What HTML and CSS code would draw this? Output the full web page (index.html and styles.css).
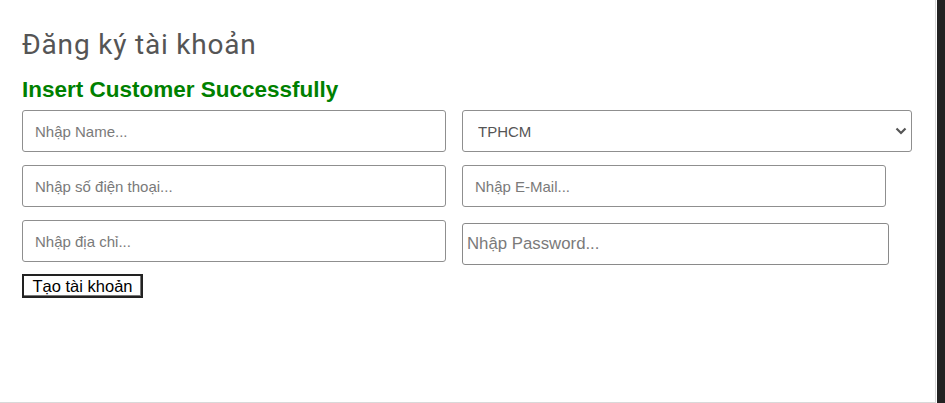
FILE: index.html
```html
<!DOCTYPE html>
<html lang="vi">
<head>
<meta charset="utf-8">
<title>Đăng ký tài khoản</title>
<link rel="stylesheet" href="styles.css">
</head>
<body>
<div class="page">
  <main class="content">
    <h2 class="title">Đăng ký tài khoản</h2>
    <h3 class="msg">Insert Customer Successfully</h3>
    <form class="form">
      <div class="grid">
        <div class="col col-left">
          <input class="field" type="text" placeholder="Nhập Name...">
          <input class="field" type="text" placeholder="Nhập số điện thoại...">
          <input class="field" type="text" placeholder="Nhập địa chỉ...">
        </div>
        <div class="col col-right">
          <div class="select-wrap">
            <select class="field select">
              <option>TPHCM</option>
            </select>
            <svg class="chev" width="12" height="8" viewBox="0 0 12 8"><path d="M1.5 1.5 L6 6 L10.5 1.5" fill="none" stroke="#555" stroke-width="2.2"/></svg>
          </div>
          <input class="field email" type="text" placeholder="Nhập E-Mail...">
          <input class="field password" type="password" placeholder="Nhập Password...">
        </div>
      </div>
      <button class="btn" type="button">Tạo tài khoản</button>
    </form>
  </main>
  <div class="bar"></div>
</div>
</body>
</html>
```

FILE: styles.css
```css
html, body {
  margin: 0;
  padding: 0;
  background: #fff;
}

.page {
  display: flex;
  width: 945px;
  height: 403px;
}

.content {
  flex: none;
  width: 913px;
  height: 402px;
  padding: 0 0 0 22px;
  border-right: 1px solid #d9d9d9;
  border-bottom: 1px solid #d9d9d9;
  box-sizing: content-box;
  font-family: "Liberation Sans", Arial, sans-serif;
}

.bar {
  flex: 1;
  background: #222;
  margin-left: 1px;
}

.title {
  margin: 0;
  padding-top: 28px;
  font-family: Roboto, "Noto Sans", sans-serif;
  font-weight: 400;
  font-size: 28px;
  letter-spacing: 0.8px;
  line-height: 34px;
  color: #555;
}

.msg {
  margin: 15px 0 0 0;
  font-family: "Liberation Sans", Arial, sans-serif;
  font-weight: 700;
  font-size: 22.5px;
  line-height: 26px;
  color: #008000;
}

.form {
  margin-top: 7px;
}

.grid {
  display: flex;
  gap: 16px;
}

.col {
  display: flex;
  flex-direction: column;
}

.col-left {
  width: 424px;
  gap: 13px;
}

.col-right {
  width: 450px;
}

.field {
  box-sizing: border-box;
  height: 42px;
  width: 424px;
  margin: 0;
  border: 1px solid #8f8f8f;
  border-radius: 3px;
  padding: 0 12px;
  font-family: "Liberation Sans", Arial, sans-serif;
  font-size: 15px;
  color: #333;
  background: #fff;
  outline: none;
}

.field::placeholder {
  color: #7a7a7a;
}

.select-wrap {
  position: relative;
  width: 450px;
}

.select {
  width: 450px;
  appearance: none;
  -webkit-appearance: none;
  padding-left: 15px;
  color: #555;
}

.chev {
  position: absolute;
  right: 5px;
  top: 17px;
  pointer-events: none;
}

.email {
  margin-top: 13px;
}

.password {
  margin-top: 16px;
  width: 427px;
  height: 42px;
  padding-left: 4px;
  font-size: 16.8px;
  border-color: #8a8a8a;
}

.password::placeholder {
  color: #7a7a7a;
}

.btn {
  margin-top: 9px;
  height: 24px;
  width: 121px;
  padding: 0;
  border: 2px solid #222;
  border-radius: 0;
  background: #fff;
  font-family: "Liberation Sans", Arial, sans-serif;
  font-size: 16.5px;
  color: #000;
  box-shadow: inset -1px -1px 0 #777;
}
```
